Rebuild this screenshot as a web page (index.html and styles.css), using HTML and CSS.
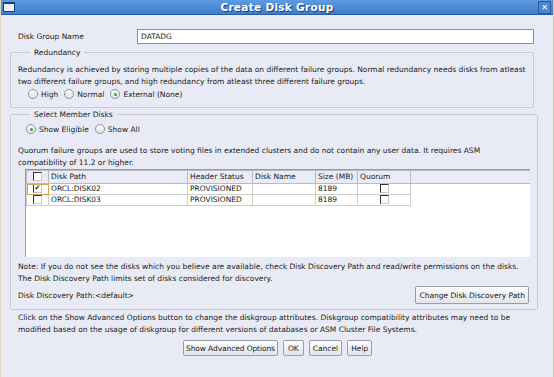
FILE: index.html
```html
<!DOCTYPE html>
<html lang="en">

<head>
    <meta charset="UTF-8">
    <title>Create Disk Group</title>
    <link rel="stylesheet" href="styles.css">
</head>

<body>
    <div class="window">
        <div class="titlebar">
            <span class="win-icon"></span>
            <span class="title">Create Disk Group</span>
            <span class="close">&#x2715;</span>
        </div>
        <div class="content">
            <div class="name-row">
                <label class="name-label">Disk Group Name</label>
                <div class="text-field">DATADG</div>
            </div>

            <fieldset class="group redundancy">
                <legend>Redundancy</legend>
                <p class="desc">Redundancy is achieved by storing multiple copies of the data on different failure groups. Normal redundancy needs disks from atleast two different failure groups, and high redundancy from atleast three different failure groups.</p>
                <div class="radios">
                    <span class="radio"><i></i>High</span>
                    <span class="radio"><i></i>Normal</span>
                    <span class="radio on"><i></i>External (None)</span>
                </div>
            </fieldset>

            <fieldset class="group members">
                <legend>Select Member Disks</legend>
                <div class="radios">
                    <span class="radio on"><i></i>Show Eligible</span>
                    <span class="radio"><i></i>Show All</span>
                </div>
                <p class="desc quorum">Quorum failure groups are used to store voting files in extended clusters and do not contain any user data. It requires ASM compatibility of 11.2 or higher.</p>
                <div class="table-wrap">
                    <table class="disks">
                        <tr>
                            <th class="c-check"><span class="box"></span></th>
                            <th class="c-path">Disk Path</th>
                            <th class="c-status">Header Status</th>
                            <th class="c-name">Disk Name</th>
                            <th class="c-size">Size (MB)</th>
                            <th class="c-quorum">Quorum</th>
                            <th class="c-rest"></th>
                        </tr>
                        <tr>
                            <td class="c-check focus"><span class="box checked">&#x2714;</span></td>
                            <td>ORCL:DISK02</td>
                            <td>PROVISIONED</td>
                            <td></td>
                            <td>8189</td>
                            <td class="mid"><span class="box"></span></td>
                            <td class="blank"></td>
                        </tr>
                        <tr>
                            <td class="c-check"><span class="box"></span></td>
                            <td>ORCL:DISK03</td>
                            <td>PROVISIONED</td>
                            <td></td>
                            <td>8189</td>
                            <td class="mid"><span class="box"></span></td>
                            <td class="blank"></td>
                        </tr>
                    </table>
                </div>
                <p class="desc note">Note: If you do not see the disks which you believe are available, check Disk Discovery Path and read/write permissions on the disks. The Disk Discovery Path limits set of disks considered for discovery.</p>
                <div class="path-row">
                    <span>Disk Discovery Path:&lt;default&gt;</span>
                    <button class="btn wide">Change Disk Discovery Path</button>
                </div>
            </fieldset>

            <p class="desc advanced">Click on the Show Advanced Options button to change the diskgroup attributes. Diskgroup compatibility attributes may need to be modified based on the usage of diskgroup for different versions of databases or ASM Cluster File Systems.</p>

            <div class="buttons">
                <button class="btn tight">Show Advanced Options</button>
                <button class="btn ok">OK</button>
                <button class="btn">Cancel</button>
                <button class="btn">Help</button>
            </div>
        </div>
    </div>
</body>

</html>
```

FILE: styles.css
```css
body {
    margin: 0;
    font-family: "DejaVu Sans", sans-serif;
    font-size: 7.5px;
    color: #1a1a1a;
}

.window {
    width: 554px;
    height: 377px;
    box-sizing: border-box;
    background-color: #e8ebf5;
    border-left: 1px solid #e2d4c0;
    border-right: 1px solid #d9c8ae;
    overflow: hidden;
}

.titlebar {
    position: relative;
    height: 14px;
    background: linear-gradient(#5e9be0, #3d7dcc);
    border-bottom: 1px solid #2a5a98;
    text-align: center;
}

.win-icon {
    position: absolute;
    left: 2px;
    top: 2px;
    width: 10px;
    height: 7px;
    border: 1px solid #1d3f6e;
    border-top-width: 2px;
    background-color: #e9eef7;
}

.title {
    color: #fff;
    font-weight: bold;
    font-size: 10.5px;
    line-height: 15px;
    letter-spacing: 0.3px;
    text-shadow: 1px 1px 0 #1d406f;
}

.close {
    position: absolute;
    right: 2px;
    top: 1px;
    width: 11px;
    height: 11px;
    border: 1px solid #2b5a95;
    background-color: #4b86cf;
    color: #fff;
    font-size: 8px;
    font-weight: bold;
    line-height: 11px;
    text-align: center;
}

.content {
    padding: 14px 19px 0 9px;
}

.name-row {
    display: flex;
    align-items: center;
    padding-left: 8px;
}

.name-label {
    width: 119px;
}

.text-field {
    flex: 1;
    height: 13px;
    line-height: 13px;
    padding-left: 3px;
    border: 1px solid #8f8f8f;
    background-color: #fff;
}

.group {
    margin: 4px 0 0;
    padding: 7px 7px 8px;
    border: 1px solid #c8cad0;
    border-radius: 2px;
}

.group legend {
    padding: 0 4px;
    margin-left: 12px;
}

.desc {
    margin: 0;
    line-height: 12px;
}

.radios {
    display: flex;
    gap: 6px;
    margin-top: 1px;
    padding-left: 10px;
}

.radio {
    display: flex;
    align-items: center;
    gap: 3px;
}

.radio i {
    width: 8px;
    height: 8px;
    border: 1px solid #8e939b;
    border-radius: 50%;
    background: linear-gradient(#fbfbfb, #e3e5ea);
    position: relative;
}

.radio.on i::after {
    content: "";
    position: absolute;
    left: 2.5px;
    top: 2.5px;
    width: 3px;
    height: 3px;
    border-radius: 50%;
    background-color: #36a43a;
}

.members {
    margin-top: 2px;
    padding-top: 2px;
    padding-bottom: 5px;
}

.members .radios {
    margin-top: 3px;
    padding-left: 8px;
}

.quorum {
    margin-top: 11px;
}

.table-wrap {
    margin: 0 0 0 7px;
    height: 87px;
    width: 504px;
    background-color: #fff;
    border-left: 1px solid #9a9a9a;
    border-top: 1px solid #9a9a9a;
}

.disks {
    border-collapse: collapse;
    width: 100%;
}

.disks th,
.disks td {
    height: 10px;
    padding: 0 2px;
    border: 1px solid #cfd0c8;
    text-align: left;
    font-weight: normal;
    white-space: nowrap;
    line-height: 10px;
}

.disks th {
    background-color: #e9ecf6;
    height: 12px;
    border-color: #b9bbbf;
}

.disks .c-rest {
    border-right: none;
}

.disks .blank {
    border: none;
}

.c-check {
    width: 17px;
    text-align: center !important;
}

.c-path {
    width: 134px;
}

.c-status {
    width: 60px;
}

.c-name {
    width: 58px;
}

.c-size {
    width: 37px;
}

.c-quorum {
    width: 48px;
}

.mid {
    text-align: center !important;
}

.focus {
    outline: 1px solid #d6a35a;
    outline-offset: -1px;
}

.box {
    display: inline-block;
    width: 7px;
    height: 7px;
    border-top: 1px solid #333;
    border-left: 1px solid #333;
    border-right: 1px solid #c8c8c8;
    border-bottom: 1px solid #c8c8c8;
    background-color: #fff;
    vertical-align: middle;
    font-size: 7px;
    line-height: 7px;
    color: #222;
    text-align: center;
}

.note {
    margin-top: 4px;
}

.path-row {
    display: flex;
    justify-content: space-between;
    align-items: center;
    margin-top: 1px;
}

.btn {
    font-family: "DejaVu Sans", sans-serif;
    font-size: 7.5px;
    color: #1a1a1a;
    height: 16px;
    padding: 0 3px;
    border: 1px solid #9a9ea6;
    border-radius: 2px;
    background: linear-gradient(#fdfdfd, #e1e4ea);
}

.btn.wide {
    height: 18px;
    margin-right: 1px;
}

.btn.tight {
    padding: 0 2px;
    letter-spacing: -0.1px;
}

.btn.ok {
    padding: 0 4px;
}

.advanced {
    margin-top: 2px;
    padding-left: 8px;
}

.buttons {
    display: flex;
    gap: 5px;
    margin-top: 4px;
    padding-left: 173px;
}
```
